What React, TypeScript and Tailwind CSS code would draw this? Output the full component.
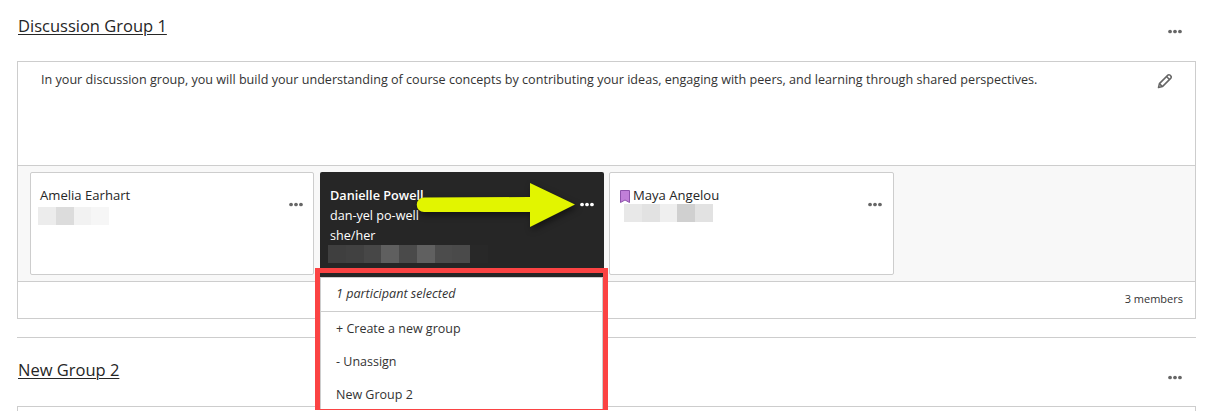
const Dots = ({ light }: { light?: boolean }) => (
  <svg width="14" height="5" viewBox="0 0 15 5" className={light ? "text-white" : "text-[#666666]"} fill="currentColor">
    <circle cx="2.2" cy="2.5" r="2" />
    <circle cx="7.5" cy="2.5" r="2" />
    <circle cx="12.8" cy="2.5" r="2" />
  </svg>
);

const Blur = ({ colors, className }: { colors: string[]; className: string }) => (
  <div className={"flex h-[18px] " + className}>
    {colors.map((c, i) => (
      <div key={i} className="h-full w-[17.75px]" style={{ background: c }} />
    ))}
  </div>
);

const Pencil = () => (
  <svg width="16" height="16" viewBox="0 0 16 16" fill="none" stroke="#666666" strokeWidth="1.5" strokeLinejoin="round">
    <path d="M1.5 14.5l.9-3.9L10.9 2.1a1.4 1.4 0 0 1 2 0l1 1a1.4 1.4 0 0 1 0 2L5.400 13.600z" />
    <path d="M9.500 3.500l3 3M2.400 10.600l3 3" />
  </svg>
);

export default function App() {
  return (
    <div className="h-[411px] w-[1215px] overflow-hidden bg-white font-['Open_Sans',sans-serif] text-[#262626]">
      <div className="pl-[17px] pr-[19px]">
        <div className="flex h-[61px] items-start justify-between pt-[15px]">
          <h2 className="ml-[1px] text-[16.5px] leading-[22px] font-medium underline underline-offset-2 decoration-1">Discussion Group 1</h2>
          <div className="mr-[14px] mt-[14px] flex"><Dots /></div>
        </div>

        <div className="border border-[#cdcdcd]">
          <div className="flex h-[103px] items-start justify-between pl-[23px] pr-[22px] pt-[8px]">
            <p className="text-[12.6px] leading-[20px] text-[#333333]">
              In your discussion group, you will build your understanding of course concepts by contributing your ideas, engaging with peers, and learning through shared perspectives.
            </p>
            <div className="mt-[3px]"><Pencil /></div>
          </div>

          <div className="flex h-[117px] gap-[6px] border-y border-[#cdcdcd] bg-[#f8f8f8] pl-[12px] pt-[6px]">
            <div className="flex h-[103px] w-[284px] justify-between rounded-[2px] border border-[#cdcdcd] bg-white pl-[9px] pr-[10px] pt-[13px]">
              <div>
                <div className="text-[13.1px] leading-[19px] font-medium">Amelia Earhart</div>
                <Blur className="-ml-[2px] mt-[2px]" colors={["#ececec", "#dcdcdc", "#f2f2f2", "#f6f6f6"]} />
              </div>
              <div className="mt-[16px]"><Dots /></div>
            </div>

            <div className="relative h-[103px] w-[284px] rounded-[2px] bg-[#262626] pl-[10px] pr-[10px] pt-[13px] text-white">
              <div className="flex justify-between">
                <div>
                  <div className="text-[12.7px] leading-[20px] font-semibold">Danielle Powell</div>
                  <div className="text-[12.6px] leading-[20px] mt-[1px]">dan-yel po-well</div>
                  <div className="text-[12.6px] leading-[20px]">she/her</div>
                  <Blur className="-ml-[2px] mt-[-1px]" colors={["#3f3f3f", "#414141", "#474747", "#5f5f5f", "#4a4a4a", "#606060", "#4c4c4c", "#4a4a4a", "#282828"]} />
                </div>
                <div className="mt-[17px]"><Dots light /></div>
              </div>

              <svg className="absolute left-[93px] top-[8px]" width="175" height="52" viewBox="0 0 175 52" style={{ filter: "drop-shadow(2px 3px 3px rgba(0,0,0,0.5))" }}>
                <path d="M11 17.500 L117 17 L117 3 L162 24.500 L117 47 L117 32 L11 32 A7.200 7.200 0 0 1 11 17.500 Z" fill="#e2f500" />
              </svg>

              <div className="absolute -left-[5px] top-[96px] z-10 h-[142px] w-[293px] border-[5px] border-[#fb4343] bg-[#262626]">
                <div className="mt-[4px] h-full border border-b-0 border-[#cdcdcd] bg-white text-[12.5px] text-[#333333]">
                  <div className="flex h-[34px] items-center border-b border-[#cdcdcd] pb-[1px] pl-[15px] text-[12.6px] italic">1 participant selected</div>
                  <div className="flex h-[33px] items-center pl-[15px] pt-[2px]">+ Create a new group</div>
                  <div className="flex h-[33px] items-center pl-[15px] pt-[2px]">- Unassign</div>
                  <div className="flex h-[33px] items-center pl-[15px] pt-[2px]">New Group 2</div>
                </div>
              </div>
            </div>

            <div className="-ml-[1px] flex h-[103px] w-[285px] justify-between rounded-[2px] border border-[#cdcdcd] bg-white pl-[10px] pr-[11px] pt-[13px]">
              <div>
                <div className="flex items-center gap-[3px] text-[13.1px] leading-[19px] font-medium">
                  <svg width="10" height="13" viewBox="0 0 10 13" className="mt-[2px]">
                    <path d="M.5.5h9v12L5 10 .5 12.500z" fill="#c07fd8" stroke="#8d52ab" />
                  </svg>
                  Maya Angelou
                </div>
                <Blur className="ml-[4px] -mt-[1px]" colors={["#e8e8e8", "#e2e2e2", "#efefef", "#d0d0d0", "#e2e2e2"]} />
              </div>
              <div className="mt-[16px]"><Dots /></div>
            </div>
          </div>

          <div className="flex h-[36px] items-center justify-end pb-[2px] pr-[12px] text-[11px] text-[#333333]">3 members</div>
        </div>

        <div className="mt-[18px] border-t border-[#cdcdcd]" />

        <div className="flex h-[68px] items-start justify-between pt-[21px]">
          <h2 className="ml-[1px] text-[16.5px] leading-[22px] font-medium underline underline-offset-2 decoration-1">New Group 2</h2>
          <div className="mr-[14px] mt-[16px] flex"><Dots /></div>
        </div>
        <div className="h-[10px] border border-b-0 border-[#cdcdcd]" />
      </div>
    </div>
  );
}
